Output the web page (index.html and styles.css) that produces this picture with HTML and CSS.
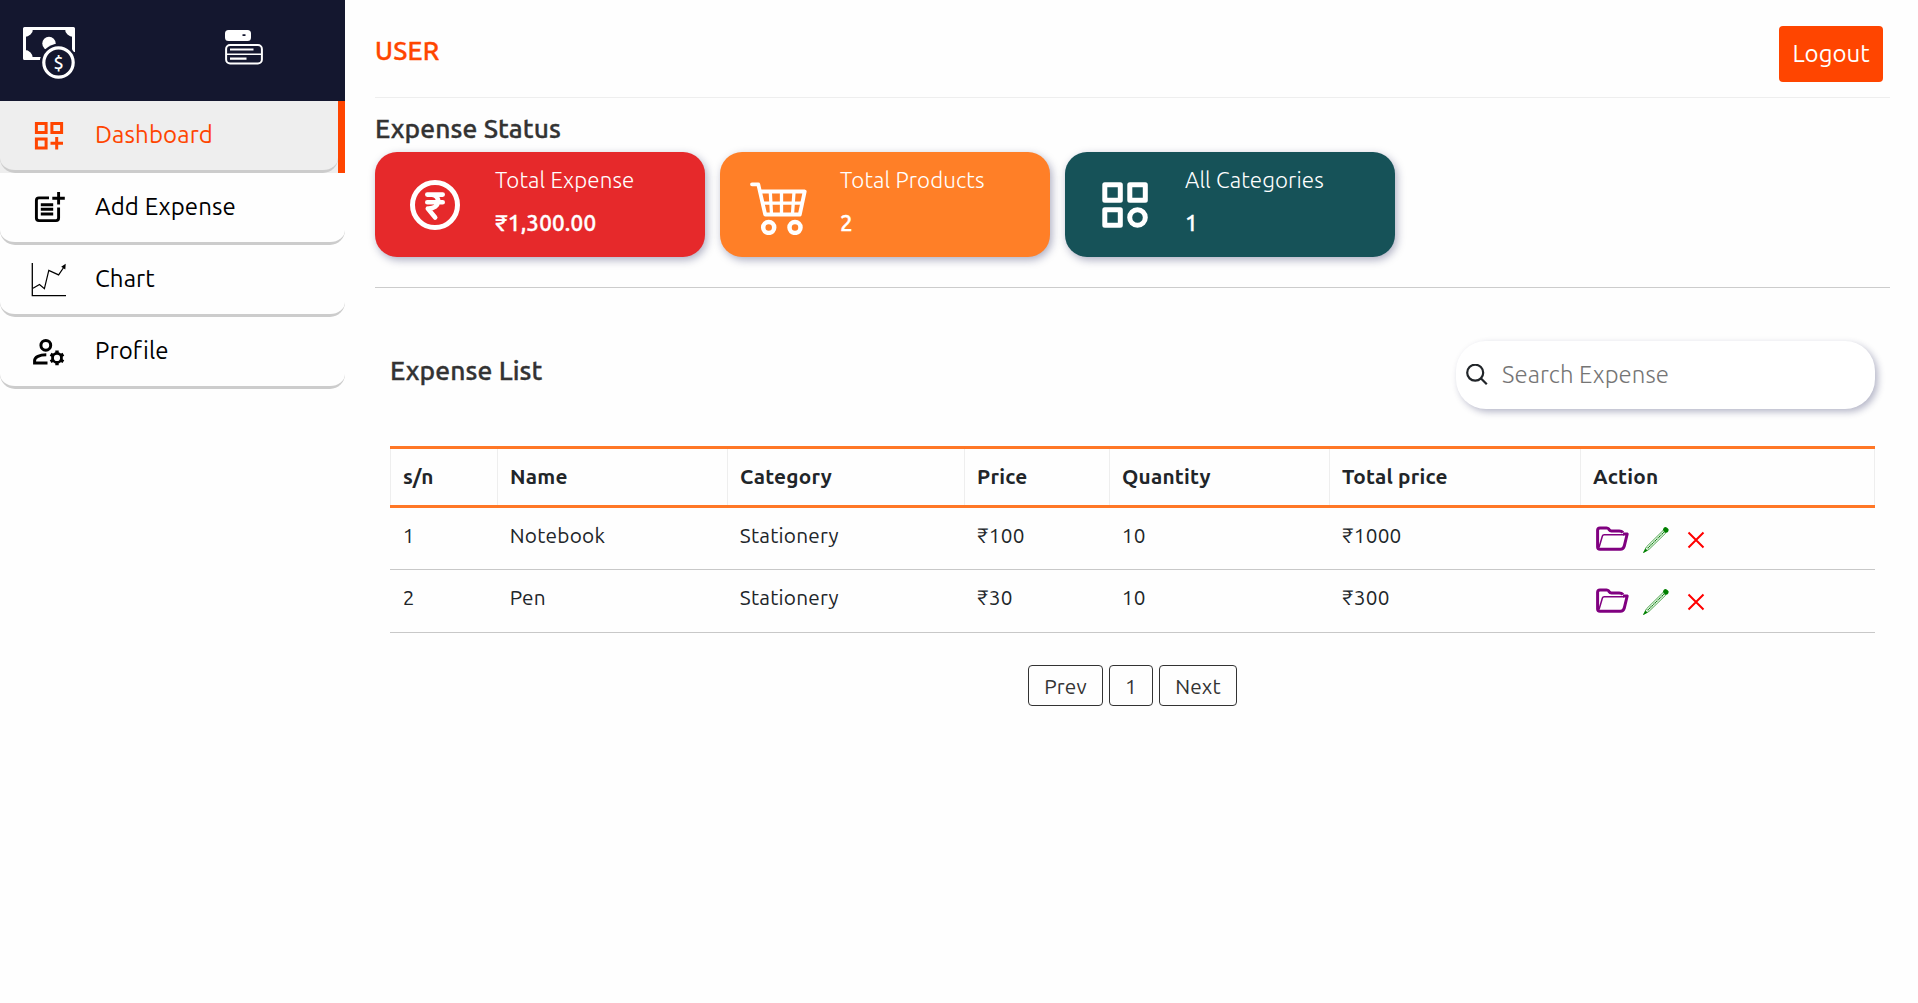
FILE: index.html
```html
<!DOCTYPE html>
<html lang="en">
<head>
<meta charset="utf-8">
<title>Expense Dashboard</title>
<link rel="stylesheet" href="styles.css">
</head>
<body>
<svg class="defs" width="0" height="0">
  <symbol id="folder" viewBox="0 0 34 26">
    <path d="M27 6.5C25.500 4.800 24.500 5 22.500 5H15.500C13.500 5 13.500 4 12.500 2.800 12 2 11.500 1.900 10.500 1.900H4C2.300 1.900 1.600 2.700 1.600 4.200V21C1.600 22.700 2.300 23.200 4 23.200H24.500C26.500 23.200 27.500 22.500 28.200 20.300L31.200 8H27" fill="none" stroke="purple" stroke-width="3" stroke-linejoin="round"/>
    <path d="M28 8.800H8.200C7.200 8.800 6.700 9 6.400 10L3 21.500" fill="none" stroke="purple" stroke-width="1.500"/>
  </symbol>
  <symbol id="pencil" viewBox="0 0 28 28">
    <path d="M21.200 4.400L4.500 20.800 1.500 26.500 7 23.400 23.800 7Z" fill="none" stroke="green" stroke-opacity=".7" stroke-width="1"/>
    <path d="M5.600 22.300L22.300 5.800" stroke="green" stroke-width="1.100" stroke-dasharray="1.500 .5"/>
    <path d="M3.500 22.500L1.200 27 5.600 24.500Z" fill="green"/>
    <rect x="21" y="1.700" width="5.600" height="4.600" rx="2" transform="rotate(40 24 4)" fill="green"/>
  </symbol>
  <symbol id="cross" viewBox="0 0 18 18">
    <path d="M1.500 1.500L16.500 16.500M16.500 1.500L1.500 16.500" stroke="red" stroke-width="2"/>
  </symbol>
</svg>
<div class="layout">
  <aside class="sidebar">
    <div class="brand">
      <svg width="54" height="54" viewBox="0 0 54 54">
        <path d="M36 32.500H2.500V2.500H51.500V26" fill="none" stroke="#fff" stroke-width="3" stroke-linejoin="round"/>
        <path d="M2 2H11A8.500 8.500 0 0 1 2 11ZM52 2H43A8.500 8.500 0 0 0 52 11ZM2 33V24A8.500 8.500 0 0 1 11 33Z" fill="#fff"/>
        <circle cx="27" cy="17.500" r="6.700" fill="#fff"/>
        <circle cx="36.500" cy="36.500" r="18.700" fill="#14172f"/>
        <circle cx="36.500" cy="36.500" r="14.700" fill="none" stroke="#fff" stroke-width="3.200"/>
        <text x="36.500" y="42.800" text-anchor="middle" class="coin">$</text>
      </svg>
      <svg width="38" height="36" viewBox="0 0 38 36">
        <path d="M3.500 1H22.500Q26 1 26 4.500V8.500Q26 12 22.500 12H3.500Q0 12 0 8.500V4.500Q0 1 3.500 1ZM17.500 5.300V7H20.500V5.300Z" fill="#fff" fill-rule="evenodd"/>
        <rect x="1.100" y="16" width="35.800" height="18.500" rx="4" fill="none" stroke="#fff" stroke-width="2"/>
        <path d="M1 25.200H37" stroke="#fff" stroke-width="1.600"/>
        <path d="M5 20.500H28.500M5 29.700H21.500" stroke="#fff" stroke-width="2.200"/>
      </svg>
    </div>
    <ul class="menu">
      <li class="active"><a class="item"><svg width="36" height="36" viewBox="0 0 36 36"><g fill="none" stroke="#ff4500" stroke-width="3"><path d="M6.400 5.400H16.100V14.600H6.400ZM21.900 5.400H31.600V14.600H21.900ZM6.400 20.900H16.100V30.100H6.400ZM26.700 19V31.500M20.500 25.300H33"/></g></svg><span>Dashboard</span></a></li>
      <li><a class="item"><svg width="36" height="36" viewBox="0 0 36 36"><g fill="none" stroke="#000" stroke-width="2.900"><path d="M19 7.900H9Q6.400 7.900 6.400 10.500V28Q6.400 30.600 9 30.600H26Q28.600 30.600 28.600 28V17.500"/><path d="M28.600 2V14.500M22.300 8.300H34.800M10.800 14.700H23.200M10.800 19.300H23.200M10.800 24H23.200"/></g></svg><span>Add Expense</span></a></li>
      <li><a class="item"><svg width="36" height="36" viewBox="0 0 36 36"><path d="M2.300 1V33.700H36" fill="none" stroke="#000" stroke-width="1.300"/><path d="M3 26.300L9.500 22.600 14.400 26.700 18.800 8.400 28.600 12.900 34 5" fill="none" stroke="#000" stroke-width="1.200"/><path d="M35.700 1.800L35.300 7.600 31.200 4.800Z"/></svg><span>Chart</span></a></li>
      <li><a class="item"><svg width="36" height="36" viewBox="0 0 36 36"><g fill="none" stroke="#000" stroke-width="3"><circle cx="15.800" cy="11.300" r="4.900"/><path d="M17.500 28.900H4.600V26.500C4.600 23 9.500 20.700 16.300 20.700"/><circle cx="27" cy="23.900" r="4.500" stroke-width="2.800"/><path d="M27 16.500V19.500M27 28.300V31.300M20.600 20.200L23.200 21.700M30.800 26.100L33.400 27.600M33.400 20.200L30.800 21.700M23.200 26.100L20.600 27.600" stroke-width="3.400"/></g></svg><span>Profile</span></a></li>
    </ul>
  </aside>
  <main class="main">
    <header class="topbar">
      <h1 class="user">USER</h1>
      <button class="logout">Logout</button>
    </header>
    <section class="status">
      <h2 class="heading">Expense Status</h2>
      <div class="cards">
        <div class="card red">
          <svg width="60" height="60" viewBox="0 0 60 60"><circle cx="30" cy="30" r="22.500" fill="none" stroke="#fff" stroke-width="5"/><g fill="none" stroke="#fff" stroke-width="4.600" stroke-linecap="round" stroke-linejoin="round"><path d="M22.300 19.600H37.700M22.300 27.200H37.700M27 19.600C35.500 20 36 34 22.800 33.500L30.200 42.500"/></g></svg>
          <div class="figures"><p>Total Expense</p><b>₹1,300.00</b></div>
        </div>
        <div class="card orange">
          <svg width="60" height="60" viewBox="0 0 60 60"><g fill="none" stroke="#fff" stroke-linejoin="round"><path d="M2 9.300H8.300L15.200 39.500H49.800L54.700 16.500H11" stroke-width="3.800" stroke-linecap="round"/><path d="M13 28.200H52M20.300 17L21.500 39M31.500 17V39M44 17L42.500 39" stroke-width="3.300"/><circle cx="18.700" cy="52.400" r="5.500" stroke-width="4.500"/><circle cx="45" cy="52.400" r="5.500" stroke-width="4.500"/></g></svg>
          <div class="figures"><p>Total Products</p><b>2</b></div>
        </div>
        <div class="card teal">
          <svg width="60" height="60" viewBox="0 0 60 60"><g fill="none" stroke="#fff" stroke-width="5" stroke-linejoin="round"><path d="M9.800 9.700H25.300V25.200H9.800ZM34.800 9.700H50.300V25.200H34.800ZM9.800 34.700H25.300V50.200H9.800Z"/><circle cx="42.500" cy="42.500" r="7.800"/></g></svg>
          <div class="figures"><p>All Categories</p><b>1</b></div>
        </div>
      </div>
    </section>
    <section class="list">
      <div class="list-head">
        <h2 class="heading">Expense List</h2>
        <label class="search">
          <svg width="22" height="22" viewBox="0 0 22 22"><g fill="none" stroke="#212529" stroke-width="2.200"><circle cx="9.200" cy="8.700" r="8"/><path d="M14.800 14.300L20.800 20.300"/></g></svg>
          <input type="text" placeholder="Search Expense">
        </label>
      </div>
      <table class="table">
        <colgroup><col class="c1"><col class="c2"><col class="c3"><col class="c4"><col class="c5"><col class="c6"><col class="c7"></colgroup>
        <thead><tr><th>s/n</th><th>Name</th><th>Category</th><th>Price</th><th>Quantity</th><th>Total price</th><th>Action</th></tr></thead>
        <tbody>
          <tr><td>1</td><td>Notebook</td><td>Stationery</td><td>₹100</td><td>10</td><td>₹1000</td><td><div class="actions"><svg width="34" height="26"><use href="#folder"/></svg><svg width="28" height="28"><use href="#pencil"/></svg><svg width="18" height="18"><use href="#cross"/></svg></div></td></tr>
          <tr class="last"><td>2</td><td>Pen</td><td>Stationery</td><td>₹30</td><td>10</td><td>₹300</td><td><div class="actions"><svg width="34" height="26"><use href="#folder"/></svg><svg width="28" height="28"><use href="#pencil"/></svg><svg width="18" height="18"><use href="#cross"/></svg></div></td></tr>
        </tbody>
      </table>
      <div class="pager"><button class="prev">Prev</button><button class="page">1</button><button class="next">Next</button></div>
    </section>
  </main>
</div>
</body>
</html>
```
FILE: styles.css
```css
* { box-sizing: border-box; margin: 0; padding: 0; }
body { background: #fefefe; color: #212529; font-family: "Ubuntu", "Noto Sans", sans-serif; font-size: 24px; overflow: hidden; }
button, input { font-family: inherit; }
svg { display: block; flex: none; }
.defs { position: absolute; }
.layout { display: flex; min-height: 1003px; }

.sidebar { width: 345px; flex: none; }
.brand { height: 101px; background: #14172f; display: flex; align-items: flex-start; padding: 26px 0 0 22px; gap: 149px; }
.brand svg + svg { margin-top: 3px; }
.coin { fill: #fff; font-size: 18px; font-weight: 500; }
.menu { list-style: none; }
.item { display: flex; align-items: center; height: 72px; padding-left: 30px; gap: 29px; border-bottom: 3px solid #ccc; border-radius: 0 0 15px 15px; color: #000; line-height: 66px; letter-spacing: .12px; }
.item span { padding-bottom: 1px; }
.active { background: #eee; border-right: 7px solid #ff4500; }
.active .item { color: #ff4500; }

.main { width: 1515px; margin-left: 30px; }
.topbar { height: 98px; border-bottom: 1px solid #eee; display: flex; justify-content: space-between; padding: 26px 7px 0 0; }
.user { font-size: 26px; font-weight: 500; line-height: 49px; color: #ff4500; letter-spacing: .25px; -webkit-text-stroke: .35px; }
.logout { width: 104px; height: 56px; border: 0; border-radius: 4px; background: #ff4500; color: #fff; font-size: 24px; padding-bottom: 1px; }
.heading { font-size: 26.4px; font-weight: 500; color: #333; line-height: 40px; letter-spacing: .1px; -webkit-text-stroke: .35px; }
.status { padding-top: 10px; height: 190px; border-bottom: 1px solid #ccc; }
.cards { display: flex; gap: 15px; margin-top: 4px; }
.card { width: 330px; height: 105px; border-radius: 22px; color: #fff; display: flex; padding: 6px 0 0 30px; gap: 30px; box-shadow: 2px 3px 8px rgba(20, 23, 80, .35); }
.card svg { margin-top: 17px; }
.figures { font-size: 22.4px; line-height: 43px; }
.figures p { font-weight: 300; letter-spacing: .08px; }
.figures b { font-weight: 500; display: block; letter-spacing: .2px; -webkit-text-stroke: .35px; }
.red { background: #e6292b; }
.orange { background: #ff7f27; }
.teal { background: #165258; }

.list { padding: 53px 15px 0; }
.list-head { display: flex; justify-content: space-between; height: 105px; }
.list-head .heading { line-height: 58px; }
.search { width: 419px; height: 68px; border-radius: 30px; background: #fff; box-shadow: 3px 3px 7px rgba(20, 23, 80, .3); display: flex; align-items: center; padding-left: 10px; gap: 14px; }
.search input { border: 0; outline: 0; background: transparent; width: 340px; font-size: 24px; font-weight: 300; height: 60px; padding-bottom: 2px; letter-spacing: .06px; }
.search input::placeholder { color: #757575; }

.table { width: 1485px; table-layout: fixed; border-collapse: separate; border-spacing: 0; font-size: 20.8px; letter-spacing: .22px; }
.c1 { width: 107px; } .c2 { width: 230px; } .c3 { width: 237px; } .c4 { width: 145px; } .c5 { width: 220px; } .c6 { width: 251px; } .c7 { width: 295px; }
th { height: 62px; text-align: left; font-weight: 700; padding: 0 0 2px 13px; border: 3px solid #ff7726; border-width: 3px 0; background: linear-gradient(#eee, #eee) left / 1px 100% no-repeat padding-box; }
th:last-child { background: linear-gradient(#eee, #eee) left / 1px 100% no-repeat padding-box, linear-gradient(#eee, #eee) right / 1px 100% no-repeat padding-box; }
td { height: 62px; vertical-align: top; line-height: 31px; padding: 12px 0 0 12.8px; border-bottom: 1px solid #c8c8c8; }
.last td { height: 63px; }
.actions { display: flex; align-items: center; margin: 6px 0 0 3.200px; }
.actions svg:nth-child(1) { margin-top: -2px; }
.actions svg:nth-child(2) { margin-left: 12px; }
.actions svg:nth-child(3) { margin-left: 17px; }

.pager { display: flex; justify-content: center; gap: 6px; margin-top: 32px; }
.pager button { height: 41px; border: 1px solid #333; border-radius: 4px; background: transparent; color: #333; font-size: 20.8px; letter-spacing: .1px; padding-top: 1px; }
.prev { width: 75px; } .page { width: 44px; } .next { width: 78px; }
```
